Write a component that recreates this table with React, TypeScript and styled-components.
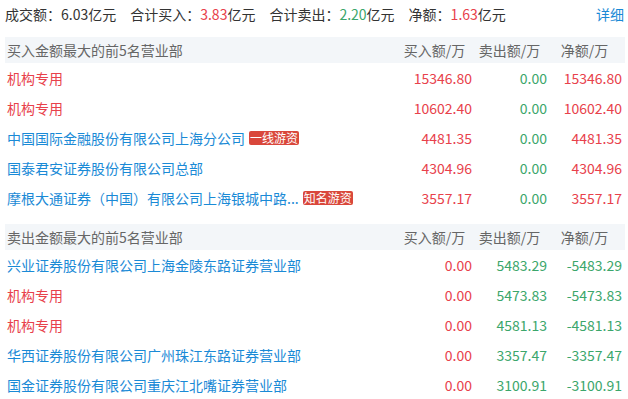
import React from "react";
import styled, { createGlobalStyle } from "styled-components";

const Global = createGlobalStyle`
  html, body { margin: 0; padding: 0; background: #fff; }
  body { font-family: "Noto Sans CJK SC", "Noto Sans", sans-serif; font-size: 14px; color: #333; }
`;

const RED = "#e8414b";
const GREEN = "#3ba66b";
const BLUE = "#1a8ad6";

const Wrap = styled.div`
  width: 628px;
  padding: 0 3px 0 5px;
  box-sizing: border-box;
`;

const Summary = styled.div`
  height: 28px;
  margin-bottom: 9px;
  display: flex;
  align-items: center;
  white-space: nowrap;
`;

const SumItem = styled.span`
  margin-right: 14px;
  color: #333;
`;

const Val = styled.span<{ $c: string }>`
  color: ${(p) => p.$c};
`;

const Detail = styled.a`
  margin-left: auto;
  color: ${BLUE};
  text-decoration: none;
  margin-right: 1px;
`;

const Section = styled.div<{ $gap: number }>`
  margin-top: ${(p) => p.$gap}px;
`;

const HeadRow = styled.div`
  display: flex;
  align-items: center;
  height: 26px;
  background: #f3f6f9;
  color: #666;
  padding: 0 3px 0 2px;
`;

const Row = styled.div`
  display: flex;
  align-items: center;
  height: 30px;
  padding: 0 3px 0 2px;
`;

const NameCell = styled.div`
  flex: 1;
  min-width: 0;
  display: flex;
  align-items: center;
  white-space: nowrap;
`;

const NameText = styled.span<{ $c: string }>`
  color: ${(p) => p.$c};
  white-space: nowrap;
`;

const Tag = styled.span`
  margin-left: 4px;
  background: #d9473b;
  color: #fff;
  font-size: 12px;
  line-height: 14px;
  height: 14px;
  padding: 0 1px;
  border-radius: 2px;
  white-space: nowrap;
`;

const HeadCell = styled.div`
  width: 75px;
  text-align: center;
  white-space: nowrap;
`;

const NumCell = styled.div<{ $c: string }>`
  width: 75px;
  text-align: right;
  color: ${(p) => p.$c};
  white-space: nowrap;
`;

type Item = { name: string; inst?: boolean; tag?: string; buy: string; sell: string; net: string };

const buyList: Item[] = [
  { name: "机构专用", inst: true, buy: "15346.80", sell: "0.00", net: "15346.80" },
  { name: "机构专用", inst: true, buy: "10602.40", sell: "0.00", net: "10602.40" },
  { name: "中国国际金融股份有限公司上海分公司", tag: "一线游资", buy: "4481.35", sell: "0.00", net: "4481.35" },
  { name: "国泰君安证券股份有限公司总部", buy: "4304.96", sell: "0.00", net: "4304.96" },
  { name: "摩根大通证券（中国）有限公司上海银城中路...", tag: "知名游资", buy: "3557.17", sell: "0.00", net: "3557.17" },
];

const sellList: Item[] = [
  { name: "兴业证券股份有限公司上海金陵东路证券营业部", buy: "0.00", sell: "5483.29", net: "-5483.29" },
  { name: "机构专用", inst: true, buy: "0.00", sell: "5473.83", net: "-5473.83" },
  { name: "机构专用", inst: true, buy: "0.00", sell: "4581.13", net: "-4581.13" },
  { name: "华西证券股份有限公司广州珠江东路证券营业部", buy: "0.00", sell: "3357.47", net: "-3357.47" },
  { name: "国金证券股份有限公司重庆江北嘴证券营业部", buy: "0.00", sell: "3100.91", net: "-3100.91" },
];

const Table = ({ title, items, gap }: { title: string; items: Item[]; gap: number }) => (
  <Section $gap={gap}>
    <HeadRow>
      <NameCell>{title}</NameCell>
      <HeadCell>买入额/万</HeadCell>
      <HeadCell>卖出额/万</HeadCell>
      <HeadCell>净额/万</HeadCell>
    </HeadRow>
    {items.map((it, i) => {
      const netColor = it.net.startsWith("-") ? GREEN : RED;
      return (
        <Row key={i}>
          <NameCell>
            <NameText $c={it.inst ? RED : BLUE}>{it.name}</NameText>
            {it.tag && <Tag>{it.tag}</Tag>}
          </NameCell>
          <NumCell $c={RED}>{it.buy}</NumCell>
          <NumCell $c={GREEN}>{it.sell}</NumCell>
          <NumCell $c={netColor}>{it.net}</NumCell>
        </Row>
      );
    })}
  </Section>
);

export default function App() {
  return (
    <>
      <Global />
      <Wrap>
        <Summary>
          <SumItem>成交额：6.03亿元</SumItem>
          <SumItem>
            合计买入：<Val $c={RED}>3.83</Val>亿元
          </SumItem>
          <SumItem>
            合计卖出：<Val $c={GREEN}>2.20</Val>亿元
          </SumItem>
          <SumItem>
            净额：<Val $c={RED}>1.63</Val>亿元
          </SumItem>
          <Detail href="#">详细</Detail>
        </Summary>
        <Table title="买入金额最大的前5名营业部" items={buyList} gap={0} />
        <Table title="卖出金额最大的前5名营业部" items={sellList} gap={11} />
      </Wrap>
    </>
  );
}
